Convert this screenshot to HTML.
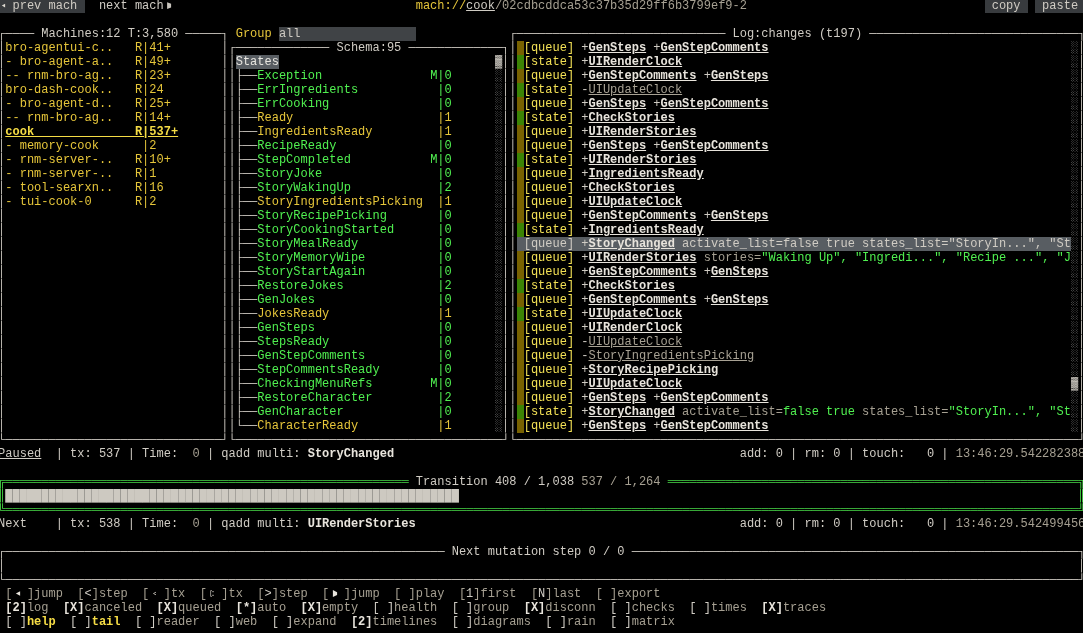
<!DOCTYPE html>
<html><head><meta charset="utf-8"><style>
html,body{margin:0;padding:0;background:#000;width:1083px;height:633px;overflow:hidden}
#t{will-change:transform;-webkit-font-smoothing:antialiased;position:absolute;left:0;top:0;width:1100px;height:660px;font-family:"Liberation Mono",monospace;font-size:12px;line-height:14px;color:#d0ccc4}
#t span{position:absolute;white-space:pre;height:14px}
#t i{position:absolute;height:14px;display:block}
</style></head><body><div id="t">
<i style="left:-1px;top:-1px;width:86px;background:#383b3e"></i>
<i style="left:985px;top:-1px;width:43px;background:#383b3e"></i>
<i style="left:1035px;top:-1px;width:51px;background:#383b3e"></i>
<i style="left:279px;top:27px;width:137px;background:#404346"></i>
<i style="left:236px;top:55px;width:43px;background:#585d62"></i>
<i style="left:517px;top:41px;width:7px;background:#786200"></i>
<i style="left:517px;top:55px;width:7px;background:#3c8404"></i>
<i style="left:517px;top:69px;width:7px;background:#786200"></i>
<i style="left:517px;top:83px;width:7px;background:#3c8404"></i>
<i style="left:517px;top:97px;width:7px;background:#786200"></i>
<i style="left:517px;top:111px;width:7px;background:#3c8404"></i>
<i style="left:517px;top:125px;width:7px;background:#786200"></i>
<i style="left:517px;top:139px;width:7px;background:#786200"></i>
<i style="left:517px;top:153px;width:7px;background:#3c8404"></i>
<i style="left:517px;top:167px;width:7px;background:#786200"></i>
<i style="left:517px;top:181px;width:7px;background:#786200"></i>
<i style="left:517px;top:195px;width:7px;background:#786200"></i>
<i style="left:517px;top:209px;width:7px;background:#786200"></i>
<i style="left:517px;top:223px;width:7px;background:#3c8404"></i>
<i style="left:517px;top:237px;width:554px;background:#585d62"></i>
<i style="left:524px;top:237px;width:51px;background:#585d62"></i>
<i style="left:582px;top:237px;width:7px;background:#585d62"></i>
<i style="left:589px;top:237px;width:86px;background:#585d62"></i>
<i style="left:683px;top:237px;width:388px;background:#585d62"></i>
<i style="left:517px;top:251px;width:7px;background:#786200"></i>
<i style="left:517px;top:265px;width:7px;background:#786200"></i>
<i style="left:517px;top:279px;width:7px;background:#3c8404"></i>
<i style="left:517px;top:293px;width:7px;background:#786200"></i>
<i style="left:517px;top:307px;width:7px;background:#3c8404"></i>
<i style="left:517px;top:321px;width:7px;background:#786200"></i>
<i style="left:517px;top:335px;width:7px;background:#786200"></i>
<i style="left:517px;top:349px;width:7px;background:#786200"></i>
<i style="left:517px;top:363px;width:7px;background:#786200"></i>
<i style="left:517px;top:377px;width:7px;background:#786200"></i>
<i style="left:517px;top:391px;width:7px;background:#786200"></i>
<i style="left:517px;top:405px;width:7px;background:#3c8404"></i>
<i style="left:517px;top:419px;width:7px;background:#786200"></i>
<span style="left:-1.9px;top:-1.2px;color:#d0ccc4;">  prev mach </span>
<span style="left:98.9px;top:-1.2px;color:#d0ccc4;">next mach</span>
<span style="left:415.7px;top:-1.2px;color:#e6c63a;">mach://</span>
<span style="left:466.1px;top:-1.2px;color:#d0ccc4;text-decoration:underline;">cook</span>
<span style="left:494.9px;top:-1.2px;color:#a6a092;">/02cdbcddca53c37b35d29ff6b3799ef9-2</span>
<span style="left:984.5px;top:-1.2px;color:#d0ccc4;"> copy </span>
<span style="left:1034.9px;top:-1.2px;color:#d0ccc4;"> paste </span>
<span style="left:-1.9px;top:26.8px;color:#d0ccc4;">┌────</span>
<span style="left:34.1px;top:26.8px;color:#d0ccc4;"> </span>
<span style="left:41.3px;top:26.8px;color:#d0ccc4;">Machines:12 T:3,580</span>
<span style="left:178.1px;top:26.8px;color:#d0ccc4;"> </span>
<span style="left:185.3px;top:26.8px;color:#d0ccc4;">─────┐</span>
<span style="left:235.7px;top:26.8px;color:#e6c63a;">Group</span>
<span style="left:278.9px;top:26.8px;color:#d0ccc4;">all                </span>
<span style="left:509.3px;top:26.8px;color:#d0ccc4;">┌─────────────────────────────</span>
<span style="left:725.3px;top:26.8px;color:#d0ccc4;"> </span>
<span style="left:732.5px;top:26.8px;color:#d0ccc4;">Log:changes (t197)</span>
<span style="left:862.1px;top:26.8px;color:#d0ccc4;"> </span>
<span style="left:869.3px;top:26.8px;color:#d0ccc4;">─────────────────────────────┐</span>
<span style="left:-1.9px;top:40.8px;color:#d0ccc4;">│</span>
<span style="left:5.3px;top:40.8px;color:#e6c63a;">bro-agentui-c..   R|41+</span>
<span style="left:221.3px;top:40.8px;color:#d0ccc4;">│</span>
<span style="left:228.5px;top:40.8px;color:#d0ccc4;">┌─────────────</span>
<span style="left:329.3px;top:40.8px;color:#d0ccc4;"> </span>
<span style="left:336.5px;top:40.8px;color:#d0ccc4;">Schema:95</span>
<span style="left:401.3px;top:40.8px;color:#d0ccc4;"> </span>
<span style="left:408.5px;top:40.8px;color:#d0ccc4;">─────────────┐</span>
<span style="left:509.3px;top:40.8px;color:#d0ccc4;">│</span>
<span style="left:516.5px;top:40.8px;"> </span>
<span style="left:523.7px;top:40.8px;color:#f2e055;">[queue]</span>
<span style="left:581.3px;top:40.8px;color:#d0ccc4;">+</span>
<span style="left:588.5px;top:40.8px;color:#e8e4dc;font-weight:bold;text-decoration:underline;">GenSteps</span>
<span style="left:653.3px;top:40.8px;color:#d0ccc4;">+</span>
<span style="left:660.5px;top:40.8px;color:#e8e4dc;font-weight:bold;text-decoration:underline;">GenStepComments</span>
<span style="left:1070.9px;top:40.8px;color:#8a8a8a;">░</span>
<span style="left:1078.1px;top:40.8px;color:#d0ccc4;">│</span>
<span style="left:-1.9px;top:54.8px;color:#d0ccc4;">│</span>
<span style="left:5.3px;top:54.8px;color:#e6c63a;">- bro-agent-a..   R|49+</span>
<span style="left:221.3px;top:54.8px;color:#d0ccc4;">│</span>
<span style="left:228.5px;top:54.8px;color:#d0ccc4;">│</span>
<span style="left:235.7px;top:54.8px;color:#e8e6e0;">States</span>
<span style="left:494.9px;top:54.8px;color:#d0ccc4;">▓</span>
<span style="left:502.1px;top:54.8px;color:#d0ccc4;">│</span>
<span style="left:509.3px;top:54.8px;color:#d0ccc4;">│</span>
<span style="left:516.5px;top:54.8px;"> </span>
<span style="left:523.7px;top:54.8px;color:#f2e055;">[state]</span>
<span style="left:581.3px;top:54.8px;color:#d0ccc4;">+</span>
<span style="left:588.5px;top:54.8px;color:#e8e4dc;font-weight:bold;text-decoration:underline;">UIRenderClock</span>
<span style="left:1070.9px;top:54.8px;color:#8a8a8a;">░</span>
<span style="left:1078.1px;top:54.8px;color:#d0ccc4;">│</span>
<span style="left:-1.9px;top:68.8px;color:#d0ccc4;">│</span>
<span style="left:5.3px;top:68.8px;color:#e6c63a;">-- rnm-bro-ag..   R|23+</span>
<span style="left:221.3px;top:68.8px;color:#d0ccc4;">│</span>
<span style="left:228.5px;top:68.8px;color:#d0ccc4;">│</span>
<span style="left:235.7px;top:68.8px;color:#d0ccc4;">├──</span>
<span style="left:257.3px;top:68.8px;color:#50f050;">Exception               M|0</span>
<span style="left:494.9px;top:68.8px;color:#8a8a8a;">░</span>
<span style="left:502.1px;top:68.8px;color:#d0ccc4;">│</span>
<span style="left:509.3px;top:68.8px;color:#d0ccc4;">│</span>
<span style="left:516.5px;top:68.8px;"> </span>
<span style="left:523.7px;top:68.8px;color:#f2e055;">[queue]</span>
<span style="left:581.3px;top:68.8px;color:#d0ccc4;">+</span>
<span style="left:588.5px;top:68.8px;color:#e8e4dc;font-weight:bold;text-decoration:underline;">GenStepComments</span>
<span style="left:703.7px;top:68.8px;color:#d0ccc4;">+</span>
<span style="left:710.9px;top:68.8px;color:#e8e4dc;font-weight:bold;text-decoration:underline;">GenSteps</span>
<span style="left:1070.9px;top:68.8px;color:#8a8a8a;">░</span>
<span style="left:1078.1px;top:68.8px;color:#d0ccc4;">│</span>
<span style="left:-1.9px;top:82.8px;color:#d0ccc4;">│</span>
<span style="left:5.3px;top:82.8px;color:#e6c63a;">bro-dash-cook..   R|24</span>
<span style="left:221.3px;top:82.8px;color:#d0ccc4;">│</span>
<span style="left:228.5px;top:82.8px;color:#d0ccc4;">│</span>
<span style="left:235.7px;top:82.8px;color:#d0ccc4;">├──</span>
<span style="left:257.3px;top:82.8px;color:#50f050;">ErrIngredients           |0</span>
<span style="left:494.9px;top:82.8px;color:#8a8a8a;">░</span>
<span style="left:502.1px;top:82.8px;color:#d0ccc4;">│</span>
<span style="left:509.3px;top:82.8px;color:#d0ccc4;">│</span>
<span style="left:516.5px;top:82.8px;"> </span>
<span style="left:523.7px;top:82.8px;color:#f2e055;">[state]</span>
<span style="left:581.3px;top:82.8px;color:#d0ccc4;">-</span>
<span style="left:588.5px;top:82.8px;color:#a8a294;text-decoration:underline;">UIUpdateClock</span>
<span style="left:1070.9px;top:82.8px;color:#8a8a8a;">░</span>
<span style="left:1078.1px;top:82.8px;color:#d0ccc4;">│</span>
<span style="left:-1.9px;top:96.8px;color:#d0ccc4;">│</span>
<span style="left:5.3px;top:96.8px;color:#e6c63a;">- bro-agent-d..   R|25+</span>
<span style="left:221.3px;top:96.8px;color:#d0ccc4;">│</span>
<span style="left:228.5px;top:96.8px;color:#d0ccc4;">│</span>
<span style="left:235.7px;top:96.8px;color:#d0ccc4;">├──</span>
<span style="left:257.3px;top:96.8px;color:#50f050;">ErrCooking               |0</span>
<span style="left:494.9px;top:96.8px;color:#8a8a8a;">░</span>
<span style="left:502.1px;top:96.8px;color:#d0ccc4;">│</span>
<span style="left:509.3px;top:96.8px;color:#d0ccc4;">│</span>
<span style="left:516.5px;top:96.8px;"> </span>
<span style="left:523.7px;top:96.8px;color:#f2e055;">[queue]</span>
<span style="left:581.3px;top:96.8px;color:#d0ccc4;">+</span>
<span style="left:588.5px;top:96.8px;color:#e8e4dc;font-weight:bold;text-decoration:underline;">GenSteps</span>
<span style="left:653.3px;top:96.8px;color:#d0ccc4;">+</span>
<span style="left:660.5px;top:96.8px;color:#e8e4dc;font-weight:bold;text-decoration:underline;">GenStepComments</span>
<span style="left:1070.9px;top:96.8px;color:#8a8a8a;">░</span>
<span style="left:1078.1px;top:96.8px;color:#d0ccc4;">│</span>
<span style="left:-1.9px;top:110.8px;color:#d0ccc4;">│</span>
<span style="left:5.3px;top:110.8px;color:#e6c63a;">-- rnm-bro-ag..   R|14+</span>
<span style="left:221.3px;top:110.8px;color:#d0ccc4;">│</span>
<span style="left:228.5px;top:110.8px;color:#d0ccc4;">│</span>
<span style="left:235.7px;top:110.8px;color:#d0ccc4;">├──</span>
<span style="left:257.3px;top:110.8px;color:#e6c63a;">Ready                    |1</span>
<span style="left:494.9px;top:110.8px;color:#8a8a8a;">░</span>
<span style="left:502.1px;top:110.8px;color:#d0ccc4;">│</span>
<span style="left:509.3px;top:110.8px;color:#d0ccc4;">│</span>
<span style="left:516.5px;top:110.8px;"> </span>
<span style="left:523.7px;top:110.8px;color:#f2e055;">[state]</span>
<span style="left:581.3px;top:110.8px;color:#d0ccc4;">+</span>
<span style="left:588.5px;top:110.8px;color:#e8e4dc;font-weight:bold;text-decoration:underline;">CheckStories</span>
<span style="left:1070.9px;top:110.8px;color:#8a8a8a;">░</span>
<span style="left:1078.1px;top:110.8px;color:#d0ccc4;">│</span>
<span style="left:-1.9px;top:124.8px;color:#d0ccc4;">│</span>
<span style="left:5.3px;top:124.8px;color:#f5dc45;font-weight:bold;text-decoration:underline;">cook              R|537+</span>
<span style="left:221.3px;top:124.8px;color:#d0ccc4;">│</span>
<span style="left:228.5px;top:124.8px;color:#d0ccc4;">│</span>
<span style="left:235.7px;top:124.8px;color:#d0ccc4;">├──</span>
<span style="left:257.3px;top:124.8px;color:#e6c63a;">IngredientsReady         |1</span>
<span style="left:494.9px;top:124.8px;color:#8a8a8a;">░</span>
<span style="left:502.1px;top:124.8px;color:#d0ccc4;">│</span>
<span style="left:509.3px;top:124.8px;color:#d0ccc4;">│</span>
<span style="left:516.5px;top:124.8px;"> </span>
<span style="left:523.7px;top:124.8px;color:#f2e055;">[queue]</span>
<span style="left:581.3px;top:124.8px;color:#d0ccc4;">+</span>
<span style="left:588.5px;top:124.8px;color:#e8e4dc;font-weight:bold;text-decoration:underline;">UIRenderStories</span>
<span style="left:1070.9px;top:124.8px;color:#8a8a8a;">░</span>
<span style="left:1078.1px;top:124.8px;color:#d0ccc4;">│</span>
<span style="left:-1.9px;top:138.8px;color:#d0ccc4;">│</span>
<span style="left:5.3px;top:138.8px;color:#e6c63a;">- memory-cook      |2</span>
<span style="left:221.3px;top:138.8px;color:#d0ccc4;">│</span>
<span style="left:228.5px;top:138.8px;color:#d0ccc4;">│</span>
<span style="left:235.7px;top:138.8px;color:#d0ccc4;">├──</span>
<span style="left:257.3px;top:138.8px;color:#50f050;">RecipeReady              |0</span>
<span style="left:494.9px;top:138.8px;color:#8a8a8a;">░</span>
<span style="left:502.1px;top:138.8px;color:#d0ccc4;">│</span>
<span style="left:509.3px;top:138.8px;color:#d0ccc4;">│</span>
<span style="left:516.5px;top:138.8px;"> </span>
<span style="left:523.7px;top:138.8px;color:#f2e055;">[queue]</span>
<span style="left:581.3px;top:138.8px;color:#d0ccc4;">+</span>
<span style="left:588.5px;top:138.8px;color:#e8e4dc;font-weight:bold;text-decoration:underline;">GenSteps</span>
<span style="left:653.3px;top:138.8px;color:#d0ccc4;">+</span>
<span style="left:660.5px;top:138.8px;color:#e8e4dc;font-weight:bold;text-decoration:underline;">GenStepComments</span>
<span style="left:1070.9px;top:138.8px;color:#8a8a8a;">░</span>
<span style="left:1078.1px;top:138.8px;color:#d0ccc4;">│</span>
<span style="left:-1.9px;top:152.8px;color:#d0ccc4;">│</span>
<span style="left:5.3px;top:152.8px;color:#e6c63a;">- rnm-server-..   R|10+</span>
<span style="left:221.3px;top:152.8px;color:#d0ccc4;">│</span>
<span style="left:228.5px;top:152.8px;color:#d0ccc4;">│</span>
<span style="left:235.7px;top:152.8px;color:#d0ccc4;">├──</span>
<span style="left:257.3px;top:152.8px;color:#50f050;">StepCompleted           M|0</span>
<span style="left:494.9px;top:152.8px;color:#8a8a8a;">░</span>
<span style="left:502.1px;top:152.8px;color:#d0ccc4;">│</span>
<span style="left:509.3px;top:152.8px;color:#d0ccc4;">│</span>
<span style="left:516.5px;top:152.8px;"> </span>
<span style="left:523.7px;top:152.8px;color:#f2e055;">[state]</span>
<span style="left:581.3px;top:152.8px;color:#d0ccc4;">+</span>
<span style="left:588.5px;top:152.8px;color:#e8e4dc;font-weight:bold;text-decoration:underline;">UIRenderStories</span>
<span style="left:1070.9px;top:152.8px;color:#8a8a8a;">░</span>
<span style="left:1078.1px;top:152.8px;color:#d0ccc4;">│</span>
<span style="left:-1.9px;top:166.8px;color:#d0ccc4;">│</span>
<span style="left:5.3px;top:166.8px;color:#e6c63a;">- rnm-server-..   R|1</span>
<span style="left:221.3px;top:166.8px;color:#d0ccc4;">│</span>
<span style="left:228.5px;top:166.8px;color:#d0ccc4;">│</span>
<span style="left:235.7px;top:166.8px;color:#d0ccc4;">├──</span>
<span style="left:257.3px;top:166.8px;color:#50f050;">StoryJoke                |0</span>
<span style="left:494.9px;top:166.8px;color:#8a8a8a;">░</span>
<span style="left:502.1px;top:166.8px;color:#d0ccc4;">│</span>
<span style="left:509.3px;top:166.8px;color:#d0ccc4;">│</span>
<span style="left:516.5px;top:166.8px;"> </span>
<span style="left:523.7px;top:166.8px;color:#f2e055;">[queue]</span>
<span style="left:581.3px;top:166.8px;color:#d0ccc4;">+</span>
<span style="left:588.5px;top:166.8px;color:#e8e4dc;font-weight:bold;text-decoration:underline;">IngredientsReady</span>
<span style="left:1070.9px;top:166.8px;color:#8a8a8a;">░</span>
<span style="left:1078.1px;top:166.8px;color:#d0ccc4;">│</span>
<span style="left:-1.9px;top:180.8px;color:#d0ccc4;">│</span>
<span style="left:5.3px;top:180.8px;color:#e6c63a;">- tool-searxn..   R|16</span>
<span style="left:221.3px;top:180.8px;color:#d0ccc4;">│</span>
<span style="left:228.5px;top:180.8px;color:#d0ccc4;">│</span>
<span style="left:235.7px;top:180.8px;color:#d0ccc4;">├──</span>
<span style="left:257.3px;top:180.8px;color:#50f050;">StoryWakingUp            |2</span>
<span style="left:494.9px;top:180.8px;color:#8a8a8a;">░</span>
<span style="left:502.1px;top:180.8px;color:#d0ccc4;">│</span>
<span style="left:509.3px;top:180.8px;color:#d0ccc4;">│</span>
<span style="left:516.5px;top:180.8px;"> </span>
<span style="left:523.7px;top:180.8px;color:#f2e055;">[queue]</span>
<span style="left:581.3px;top:180.8px;color:#d0ccc4;">+</span>
<span style="left:588.5px;top:180.8px;color:#e8e4dc;font-weight:bold;text-decoration:underline;">CheckStories</span>
<span style="left:1070.9px;top:180.8px;color:#8a8a8a;">░</span>
<span style="left:1078.1px;top:180.8px;color:#d0ccc4;">│</span>
<span style="left:-1.9px;top:194.8px;color:#d0ccc4;">│</span>
<span style="left:5.3px;top:194.8px;color:#e6c63a;">- tui-cook-0      R|2</span>
<span style="left:221.3px;top:194.8px;color:#d0ccc4;">│</span>
<span style="left:228.5px;top:194.8px;color:#d0ccc4;">│</span>
<span style="left:235.7px;top:194.8px;color:#d0ccc4;">├──</span>
<span style="left:257.3px;top:194.8px;color:#e6c63a;">StoryIngredientsPicking  |1</span>
<span style="left:494.9px;top:194.8px;color:#8a8a8a;">░</span>
<span style="left:502.1px;top:194.8px;color:#d0ccc4;">│</span>
<span style="left:509.3px;top:194.8px;color:#d0ccc4;">│</span>
<span style="left:516.5px;top:194.8px;"> </span>
<span style="left:523.7px;top:194.8px;color:#f2e055;">[queue]</span>
<span style="left:581.3px;top:194.8px;color:#d0ccc4;">+</span>
<span style="left:588.5px;top:194.8px;color:#e8e4dc;font-weight:bold;text-decoration:underline;">UIUpdateClock</span>
<span style="left:1070.9px;top:194.8px;color:#8a8a8a;">░</span>
<span style="left:1078.1px;top:194.8px;color:#d0ccc4;">│</span>
<span style="left:-1.9px;top:208.8px;color:#d0ccc4;">│</span>
<span style="left:221.3px;top:208.8px;color:#d0ccc4;">│</span>
<span style="left:228.5px;top:208.8px;color:#d0ccc4;">│</span>
<span style="left:235.7px;top:208.8px;color:#d0ccc4;">├──</span>
<span style="left:257.3px;top:208.8px;color:#50f050;">StoryRecipePicking       |0</span>
<span style="left:494.9px;top:208.8px;color:#8a8a8a;">░</span>
<span style="left:502.1px;top:208.8px;color:#d0ccc4;">│</span>
<span style="left:509.3px;top:208.8px;color:#d0ccc4;">│</span>
<span style="left:516.5px;top:208.8px;"> </span>
<span style="left:523.7px;top:208.8px;color:#f2e055;">[queue]</span>
<span style="left:581.3px;top:208.8px;color:#d0ccc4;">+</span>
<span style="left:588.5px;top:208.8px;color:#e8e4dc;font-weight:bold;text-decoration:underline;">GenStepComments</span>
<span style="left:703.7px;top:208.8px;color:#d0ccc4;">+</span>
<span style="left:710.9px;top:208.8px;color:#e8e4dc;font-weight:bold;text-decoration:underline;">GenSteps</span>
<span style="left:1070.9px;top:208.8px;color:#8a8a8a;">░</span>
<span style="left:1078.1px;top:208.8px;color:#d0ccc4;">│</span>
<span style="left:-1.9px;top:222.8px;color:#d0ccc4;">│</span>
<span style="left:221.3px;top:222.8px;color:#d0ccc4;">│</span>
<span style="left:228.5px;top:222.8px;color:#d0ccc4;">│</span>
<span style="left:235.7px;top:222.8px;color:#d0ccc4;">├──</span>
<span style="left:257.3px;top:222.8px;color:#50f050;">StoryCookingStarted      |0</span>
<span style="left:494.9px;top:222.8px;color:#8a8a8a;">░</span>
<span style="left:502.1px;top:222.8px;color:#d0ccc4;">│</span>
<span style="left:509.3px;top:222.8px;color:#d0ccc4;">│</span>
<span style="left:516.5px;top:222.8px;"> </span>
<span style="left:523.7px;top:222.8px;color:#f2e055;">[state]</span>
<span style="left:581.3px;top:222.8px;color:#d0ccc4;">+</span>
<span style="left:588.5px;top:222.8px;color:#e8e4dc;font-weight:bold;text-decoration:underline;">IngredientsReady</span>
<span style="left:1070.9px;top:222.8px;color:#8a8a8a;">░</span>
<span style="left:1078.1px;top:222.8px;color:#d0ccc4;">│</span>
<span style="left:-1.9px;top:236.8px;color:#d0ccc4;">│</span>
<span style="left:221.3px;top:236.8px;color:#d0ccc4;">│</span>
<span style="left:228.5px;top:236.8px;color:#d0ccc4;">│</span>
<span style="left:235.7px;top:236.8px;color:#d0ccc4;">├──</span>
<span style="left:257.3px;top:236.8px;color:#50f050;">StoryMealReady           |0</span>
<span style="left:494.9px;top:236.8px;color:#8a8a8a;">░</span>
<span style="left:502.1px;top:236.8px;color:#d0ccc4;">│</span>
<span style="left:509.3px;top:236.8px;color:#d0ccc4;">│</span>
<span style="left:516.5px;top:236.8px;">                                                                             </span>
<span style="left:523.7px;top:236.8px;color:#d0ccc4;">[queue]</span>
<span style="left:581.3px;top:236.8px;color:#d0ccc4;">+</span>
<span style="left:588.5px;top:236.8px;color:#e8e4dc;font-weight:bold;text-decoration:underline;">StoryChanged</span>
<span style="left:682.1px;top:236.8px;color:#d0ccc4;">activate_list=false true states_list=&quot;StoryIn...&quot;, &quot;St</span>
<span style="left:1070.9px;top:236.8px;color:#8a8a8a;">░</span>
<span style="left:1078.1px;top:236.8px;color:#d0ccc4;">│</span>
<span style="left:-1.9px;top:250.8px;color:#d0ccc4;">│</span>
<span style="left:221.3px;top:250.8px;color:#d0ccc4;">│</span>
<span style="left:228.5px;top:250.8px;color:#d0ccc4;">│</span>
<span style="left:235.7px;top:250.8px;color:#d0ccc4;">├──</span>
<span style="left:257.3px;top:250.8px;color:#50f050;">StoryMemoryWipe          |0</span>
<span style="left:494.9px;top:250.8px;color:#8a8a8a;">░</span>
<span style="left:502.1px;top:250.8px;color:#d0ccc4;">│</span>
<span style="left:509.3px;top:250.8px;color:#d0ccc4;">│</span>
<span style="left:516.5px;top:250.8px;"> </span>
<span style="left:523.7px;top:250.8px;color:#f2e055;">[queue]</span>
<span style="left:581.3px;top:250.8px;color:#d0ccc4;">+</span>
<span style="left:588.5px;top:250.8px;color:#e8e4dc;font-weight:bold;text-decoration:underline;">UIRenderStories</span>
<span style="left:703.7px;top:250.8px;color:#a6a092;">stories=</span>
<span style="left:761.3px;top:250.8px;color:#50f050;">&quot;Waking Up&quot;, &quot;Ingredi...&quot;, &quot;Recipe ...&quot;, &quot;J</span>
<span style="left:1070.9px;top:250.8px;color:#8a8a8a;">░</span>
<span style="left:1078.1px;top:250.8px;color:#d0ccc4;">│</span>
<span style="left:-1.9px;top:264.8px;color:#d0ccc4;">│</span>
<span style="left:221.3px;top:264.8px;color:#d0ccc4;">│</span>
<span style="left:228.5px;top:264.8px;color:#d0ccc4;">│</span>
<span style="left:235.7px;top:264.8px;color:#d0ccc4;">├──</span>
<span style="left:257.3px;top:264.8px;color:#50f050;">StoryStartAgain          |0</span>
<span style="left:494.9px;top:264.8px;color:#8a8a8a;">░</span>
<span style="left:502.1px;top:264.8px;color:#d0ccc4;">│</span>
<span style="left:509.3px;top:264.8px;color:#d0ccc4;">│</span>
<span style="left:516.5px;top:264.8px;"> </span>
<span style="left:523.7px;top:264.8px;color:#f2e055;">[queue]</span>
<span style="left:581.3px;top:264.8px;color:#d0ccc4;">+</span>
<span style="left:588.5px;top:264.8px;color:#e8e4dc;font-weight:bold;text-decoration:underline;">GenStepComments</span>
<span style="left:703.7px;top:264.8px;color:#d0ccc4;">+</span>
<span style="left:710.9px;top:264.8px;color:#e8e4dc;font-weight:bold;text-decoration:underline;">GenSteps</span>
<span style="left:1070.9px;top:264.8px;color:#8a8a8a;">░</span>
<span style="left:1078.1px;top:264.8px;color:#d0ccc4;">│</span>
<span style="left:-1.9px;top:278.8px;color:#d0ccc4;">│</span>
<span style="left:221.3px;top:278.8px;color:#d0ccc4;">│</span>
<span style="left:228.5px;top:278.8px;color:#d0ccc4;">│</span>
<span style="left:235.7px;top:278.8px;color:#d0ccc4;">├──</span>
<span style="left:257.3px;top:278.8px;color:#50f050;">RestoreJokes             |2</span>
<span style="left:494.9px;top:278.8px;color:#8a8a8a;">░</span>
<span style="left:502.1px;top:278.8px;color:#d0ccc4;">│</span>
<span style="left:509.3px;top:278.8px;color:#d0ccc4;">│</span>
<span style="left:516.5px;top:278.8px;"> </span>
<span style="left:523.7px;top:278.8px;color:#f2e055;">[state]</span>
<span style="left:581.3px;top:278.8px;color:#d0ccc4;">+</span>
<span style="left:588.5px;top:278.8px;color:#e8e4dc;font-weight:bold;text-decoration:underline;">CheckStories</span>
<span style="left:1070.9px;top:278.8px;color:#8a8a8a;">░</span>
<span style="left:1078.1px;top:278.8px;color:#d0ccc4;">│</span>
<span style="left:-1.9px;top:292.8px;color:#d0ccc4;">│</span>
<span style="left:221.3px;top:292.8px;color:#d0ccc4;">│</span>
<span style="left:228.5px;top:292.8px;color:#d0ccc4;">│</span>
<span style="left:235.7px;top:292.8px;color:#d0ccc4;">├──</span>
<span style="left:257.3px;top:292.8px;color:#50f050;">GenJokes                 |0</span>
<span style="left:494.9px;top:292.8px;color:#8a8a8a;">░</span>
<span style="left:502.1px;top:292.8px;color:#d0ccc4;">│</span>
<span style="left:509.3px;top:292.8px;color:#d0ccc4;">│</span>
<span style="left:516.5px;top:292.8px;"> </span>
<span style="left:523.7px;top:292.8px;color:#f2e055;">[queue]</span>
<span style="left:581.3px;top:292.8px;color:#d0ccc4;">+</span>
<span style="left:588.5px;top:292.8px;color:#e8e4dc;font-weight:bold;text-decoration:underline;">GenStepComments</span>
<span style="left:703.7px;top:292.8px;color:#d0ccc4;">+</span>
<span style="left:710.9px;top:292.8px;color:#e8e4dc;font-weight:bold;text-decoration:underline;">GenSteps</span>
<span style="left:1070.9px;top:292.8px;color:#8a8a8a;">░</span>
<span style="left:1078.1px;top:292.8px;color:#d0ccc4;">│</span>
<span style="left:-1.9px;top:306.8px;color:#d0ccc4;">│</span>
<span style="left:221.3px;top:306.8px;color:#d0ccc4;">│</span>
<span style="left:228.5px;top:306.8px;color:#d0ccc4;">│</span>
<span style="left:235.7px;top:306.8px;color:#d0ccc4;">├──</span>
<span style="left:257.3px;top:306.8px;color:#e6c63a;">JokesReady               |1</span>
<span style="left:494.9px;top:306.8px;color:#8a8a8a;">░</span>
<span style="left:502.1px;top:306.8px;color:#d0ccc4;">│</span>
<span style="left:509.3px;top:306.8px;color:#d0ccc4;">│</span>
<span style="left:516.5px;top:306.8px;"> </span>
<span style="left:523.7px;top:306.8px;color:#f2e055;">[state]</span>
<span style="left:581.3px;top:306.8px;color:#d0ccc4;">+</span>
<span style="left:588.5px;top:306.8px;color:#e8e4dc;font-weight:bold;text-decoration:underline;">UIUpdateClock</span>
<span style="left:1070.9px;top:306.8px;color:#8a8a8a;">░</span>
<span style="left:1078.1px;top:306.8px;color:#d0ccc4;">│</span>
<span style="left:-1.9px;top:320.8px;color:#d0ccc4;">│</span>
<span style="left:221.3px;top:320.8px;color:#d0ccc4;">│</span>
<span style="left:228.5px;top:320.8px;color:#d0ccc4;">│</span>
<span style="left:235.7px;top:320.8px;color:#d0ccc4;">├──</span>
<span style="left:257.3px;top:320.8px;color:#50f050;">GenSteps                 |0</span>
<span style="left:494.9px;top:320.8px;color:#8a8a8a;">░</span>
<span style="left:502.1px;top:320.8px;color:#d0ccc4;">│</span>
<span style="left:509.3px;top:320.8px;color:#d0ccc4;">│</span>
<span style="left:516.5px;top:320.8px;"> </span>
<span style="left:523.7px;top:320.8px;color:#f2e055;">[queue]</span>
<span style="left:581.3px;top:320.8px;color:#d0ccc4;">+</span>
<span style="left:588.5px;top:320.8px;color:#e8e4dc;font-weight:bold;text-decoration:underline;">UIRenderClock</span>
<span style="left:1070.9px;top:320.8px;color:#8a8a8a;">░</span>
<span style="left:1078.1px;top:320.8px;color:#d0ccc4;">│</span>
<span style="left:-1.9px;top:334.8px;color:#d0ccc4;">│</span>
<span style="left:221.3px;top:334.8px;color:#d0ccc4;">│</span>
<span style="left:228.5px;top:334.8px;color:#d0ccc4;">│</span>
<span style="left:235.7px;top:334.8px;color:#d0ccc4;">├──</span>
<span style="left:257.3px;top:334.8px;color:#50f050;">StepsReady               |0</span>
<span style="left:494.9px;top:334.8px;color:#8a8a8a;">░</span>
<span style="left:502.1px;top:334.8px;color:#d0ccc4;">│</span>
<span style="left:509.3px;top:334.8px;color:#d0ccc4;">│</span>
<span style="left:516.5px;top:334.8px;"> </span>
<span style="left:523.7px;top:334.8px;color:#f2e055;">[queue]</span>
<span style="left:581.3px;top:334.8px;color:#d0ccc4;">-</span>
<span style="left:588.5px;top:334.8px;color:#a8a294;text-decoration:underline;">UIUpdateClock</span>
<span style="left:1070.9px;top:334.8px;color:#8a8a8a;">░</span>
<span style="left:1078.1px;top:334.8px;color:#d0ccc4;">│</span>
<span style="left:-1.9px;top:348.8px;color:#d0ccc4;">│</span>
<span style="left:221.3px;top:348.8px;color:#d0ccc4;">│</span>
<span style="left:228.5px;top:348.8px;color:#d0ccc4;">│</span>
<span style="left:235.7px;top:348.8px;color:#d0ccc4;">├──</span>
<span style="left:257.3px;top:348.8px;color:#50f050;">GenStepComments          |0</span>
<span style="left:494.9px;top:348.8px;color:#8a8a8a;">░</span>
<span style="left:502.1px;top:348.8px;color:#d0ccc4;">│</span>
<span style="left:509.3px;top:348.8px;color:#d0ccc4;">│</span>
<span style="left:516.5px;top:348.8px;"> </span>
<span style="left:523.7px;top:348.8px;color:#f2e055;">[queue]</span>
<span style="left:581.3px;top:348.8px;color:#d0ccc4;">-</span>
<span style="left:588.5px;top:348.8px;color:#a8a294;text-decoration:underline;">StoryIngredientsPicking</span>
<span style="left:1070.9px;top:348.8px;color:#8a8a8a;">░</span>
<span style="left:1078.1px;top:348.8px;color:#d0ccc4;">│</span>
<span style="left:-1.9px;top:362.8px;color:#d0ccc4;">│</span>
<span style="left:221.3px;top:362.8px;color:#d0ccc4;">│</span>
<span style="left:228.5px;top:362.8px;color:#d0ccc4;">│</span>
<span style="left:235.7px;top:362.8px;color:#d0ccc4;">├──</span>
<span style="left:257.3px;top:362.8px;color:#50f050;">StepCommentsReady        |0</span>
<span style="left:494.9px;top:362.8px;color:#8a8a8a;">░</span>
<span style="left:502.1px;top:362.8px;color:#d0ccc4;">│</span>
<span style="left:509.3px;top:362.8px;color:#d0ccc4;">│</span>
<span style="left:516.5px;top:362.8px;"> </span>
<span style="left:523.7px;top:362.8px;color:#f2e055;">[queue]</span>
<span style="left:581.3px;top:362.8px;color:#d0ccc4;">+</span>
<span style="left:588.5px;top:362.8px;color:#e8e4dc;font-weight:bold;text-decoration:underline;">StoryRecipePicking</span>
<span style="left:1070.9px;top:362.8px;color:#8a8a8a;">░</span>
<span style="left:1078.1px;top:362.8px;color:#d0ccc4;">│</span>
<span style="left:-1.9px;top:376.8px;color:#d0ccc4;">│</span>
<span style="left:221.3px;top:376.8px;color:#d0ccc4;">│</span>
<span style="left:228.5px;top:376.8px;color:#d0ccc4;">│</span>
<span style="left:235.7px;top:376.8px;color:#d0ccc4;">├──</span>
<span style="left:257.3px;top:376.8px;color:#50f050;">CheckingMenuRefs        M|0</span>
<span style="left:494.9px;top:376.8px;color:#8a8a8a;">░</span>
<span style="left:502.1px;top:376.8px;color:#d0ccc4;">│</span>
<span style="left:509.3px;top:376.8px;color:#d0ccc4;">│</span>
<span style="left:516.5px;top:376.8px;"> </span>
<span style="left:523.7px;top:376.8px;color:#f2e055;">[queue]</span>
<span style="left:581.3px;top:376.8px;color:#d0ccc4;">+</span>
<span style="left:588.5px;top:376.8px;color:#e8e4dc;font-weight:bold;text-decoration:underline;">UIUpdateClock</span>
<span style="left:1070.9px;top:376.8px;color:#d0ccc4;">▓</span>
<span style="left:1078.1px;top:376.8px;color:#d0ccc4;">│</span>
<span style="left:-1.9px;top:390.8px;color:#d0ccc4;">│</span>
<span style="left:221.3px;top:390.8px;color:#d0ccc4;">│</span>
<span style="left:228.5px;top:390.8px;color:#d0ccc4;">│</span>
<span style="left:235.7px;top:390.8px;color:#d0ccc4;">├──</span>
<span style="left:257.3px;top:390.8px;color:#50f050;">RestoreCharacter         |2</span>
<span style="left:494.9px;top:390.8px;color:#8a8a8a;">░</span>
<span style="left:502.1px;top:390.8px;color:#d0ccc4;">│</span>
<span style="left:509.3px;top:390.8px;color:#d0ccc4;">│</span>
<span style="left:516.5px;top:390.8px;"> </span>
<span style="left:523.7px;top:390.8px;color:#f2e055;">[queue]</span>
<span style="left:581.3px;top:390.8px;color:#d0ccc4;">+</span>
<span style="left:588.5px;top:390.8px;color:#e8e4dc;font-weight:bold;text-decoration:underline;">GenSteps</span>
<span style="left:653.3px;top:390.8px;color:#d0ccc4;">+</span>
<span style="left:660.5px;top:390.8px;color:#e8e4dc;font-weight:bold;text-decoration:underline;">GenStepComments</span>
<span style="left:1070.9px;top:390.8px;color:#8a8a8a;">░</span>
<span style="left:1078.1px;top:390.8px;color:#d0ccc4;">│</span>
<span style="left:-1.9px;top:404.8px;color:#d0ccc4;">│</span>
<span style="left:221.3px;top:404.8px;color:#d0ccc4;">│</span>
<span style="left:228.5px;top:404.8px;color:#d0ccc4;">│</span>
<span style="left:235.7px;top:404.8px;color:#d0ccc4;">├──</span>
<span style="left:257.3px;top:404.8px;color:#50f050;">GenCharacter             |0</span>
<span style="left:494.9px;top:404.8px;color:#8a8a8a;">░</span>
<span style="left:502.1px;top:404.8px;color:#d0ccc4;">│</span>
<span style="left:509.3px;top:404.8px;color:#d0ccc4;">│</span>
<span style="left:516.5px;top:404.8px;"> </span>
<span style="left:523.7px;top:404.8px;color:#f2e055;">[state]</span>
<span style="left:581.3px;top:404.8px;color:#d0ccc4;">+</span>
<span style="left:588.5px;top:404.8px;color:#e8e4dc;font-weight:bold;text-decoration:underline;">StoryChanged</span>
<span style="left:682.1px;top:404.8px;color:#a6a092;">activate_list=</span>
<span style="left:782.9px;top:404.8px;color:#50f050;">false true</span>
<span style="left:854.9px;top:404.8px;color:#a6a092;"> states_list=</span>
<span style="left:948.5px;top:404.8px;color:#50f050;">&quot;StoryIn...&quot;, &quot;St</span>
<span style="left:1070.9px;top:404.8px;color:#8a8a8a;">░</span>
<span style="left:1078.1px;top:404.8px;color:#d0ccc4;">│</span>
<span style="left:-1.9px;top:418.8px;color:#d0ccc4;">│</span>
<span style="left:221.3px;top:418.8px;color:#d0ccc4;">│</span>
<span style="left:228.5px;top:418.8px;color:#d0ccc4;">│</span>
<span style="left:235.7px;top:418.8px;color:#d0ccc4;">└──</span>
<span style="left:257.3px;top:418.8px;color:#e6c63a;">CharacterReady           |1</span>
<span style="left:494.9px;top:418.8px;color:#8a8a8a;">░</span>
<span style="left:502.1px;top:418.8px;color:#d0ccc4;">│</span>
<span style="left:509.3px;top:418.8px;color:#d0ccc4;">│</span>
<span style="left:516.5px;top:418.8px;"> </span>
<span style="left:523.7px;top:418.8px;color:#f2e055;">[queue]</span>
<span style="left:581.3px;top:418.8px;color:#d0ccc4;">+</span>
<span style="left:588.5px;top:418.8px;color:#e8e4dc;font-weight:bold;text-decoration:underline;">GenSteps</span>
<span style="left:653.3px;top:418.8px;color:#d0ccc4;">+</span>
<span style="left:660.5px;top:418.8px;color:#e8e4dc;font-weight:bold;text-decoration:underline;">GenStepComments</span>
<span style="left:1070.9px;top:418.8px;color:#8a8a8a;">░</span>
<span style="left:1078.1px;top:418.8px;color:#d0ccc4;">│</span>
<span style="left:-1.9px;top:432.8px;color:#d0ccc4;">└──────────────────────────────┘</span>
<span style="left:228.5px;top:432.8px;color:#d0ccc4;">└─────────────────────────────────────┘</span>
<span style="left:509.3px;top:432.8px;color:#d0ccc4;">└──────────────────────────────────────────────────────────────────────────────┘</span>
<span style="left:-1.9px;top:446.8px;color:#d0ccc4;text-decoration:underline;">Paused</span>
<span style="left:55.7px;top:446.8px;color:#d0ccc4;">| tx: 537 | Time:  </span>
<span style="left:192.5px;top:446.8px;color:#a6a092;">0</span>
<span style="left:199.7px;top:446.8px;color:#d0ccc4;"> | qadd multi: </span>
<span style="left:307.7px;top:446.8px;color:#e8e4dc;font-weight:bold;">StoryChanged</span>
<span style="left:739.7px;top:446.8px;color:#d0ccc4;">add: 0 | rm: 0 | touch:   0 | </span>
<span style="left:955.7px;top:446.8px;color:#a6a092;">13:46:29.542282388</span>
<span style="left:-1.9px;top:474.8px;color:#48d848;">╔════════════════════════════════════════════════════════</span>
<span style="left:408.5px;top:474.8px;color:#48d848;"> </span>
<span style="left:415.7px;top:474.8px;color:#d0ccc4;">Transition 408 / 1,038</span>
<span style="left:574.1px;top:474.8px;color:#a6a092;"> 537 / 1,264</span>
<span style="left:660.5px;top:474.8px;color:#48d848;"> </span>
<span style="left:667.7px;top:474.8px;color:#48d848;">═════════════════════════════════════════════════════════╗</span>
<span style="left:-1.9px;top:488.8px;color:#48d848;">║</span>
<span style="left:5.3px;top:488.8px;color:#cdc9c1;">███████████████████████████████████████████████████████████████</span>
<span style="left:1078.1px;top:488.8px;color:#48d848;">║</span>
<span style="left:-1.9px;top:502.8px;color:#48d848;">╚═════════════════════════════════════════════════════════════════════════════════════════════════════════════════════════════════════════════════════╝</span>
<span style="left:-1.9px;top:516.8px;color:#d0ccc4;">Next</span>
<span style="left:55.7px;top:516.8px;color:#d0ccc4;">| tx: 538 | Time:  </span>
<span style="left:192.5px;top:516.8px;color:#a6a092;">0</span>
<span style="left:199.7px;top:516.8px;color:#d0ccc4;"> | qadd multi: </span>
<span style="left:307.7px;top:516.8px;color:#e8e4dc;font-weight:bold;">UIRenderStories</span>
<span style="left:739.7px;top:516.8px;color:#d0ccc4;">add: 0 | rm: 0 | touch:   0 | </span>
<span style="left:955.7px;top:516.8px;color:#a6a092;">13:46:29.542499456</span>
<span style="left:-1.9px;top:544.8px;color:#d0ccc4;">┌─────────────────────────────────────────────────────────────</span>
<span style="left:444.5px;top:544.8px;color:#d0ccc4;"> </span>
<span style="left:451.7px;top:544.8px;color:#d0ccc4;">Next mutation step 0 / 0</span>
<span style="left:624.5px;top:544.8px;color:#d0ccc4;"> </span>
<span style="left:631.7px;top:544.8px;color:#d0ccc4;">──────────────────────────────────────────────────────────────┐</span>
<span style="left:-1.9px;top:558.8px;color:#d0ccc4;">│</span>
<span style="left:1078.1px;top:558.8px;color:#d0ccc4;">│</span>
<span style="left:-1.9px;top:572.8px;color:#d0ccc4;">└─────────────────────────────────────────────────────────────────────────────────────────────────────────────────────────────────────────────────────┘</span>
<span style="left:5.3px;top:586.8px;color:#a6a092;">[</span>
<span style="left:12.5px;top:586.8px;color:#d0ccc4;"> </span>
<span style="left:19.7px;top:586.8px;color:#d0ccc4;"> </span>
<span style="left:26.9px;top:586.8px;color:#a6a092;">]</span>
<span style="left:34.1px;top:586.8px;color:#a6a092;">jump</span>
<span style="left:77.3px;top:586.8px;color:#a6a092;">[</span>
<span style="left:84.5px;top:586.8px;color:#d0ccc4;">&lt;</span>
<span style="left:91.7px;top:586.8px;color:#a6a092;">]</span>
<span style="left:98.9px;top:586.8px;color:#a6a092;">step</span>
<span style="left:142.1px;top:586.8px;color:#a6a092;">[</span>
<span style="left:149.3px;top:586.8px;color:#d0ccc4;"> </span>
<span style="left:156.5px;top:586.8px;color:#d0ccc4;"> </span>
<span style="left:163.7px;top:586.8px;color:#a6a092;">]</span>
<span style="left:170.9px;top:586.8px;color:#a6a092;">tx</span>
<span style="left:199.7px;top:586.8px;color:#a6a092;">[</span>
<span style="left:206.9px;top:586.8px;color:#d0ccc4;"> </span>
<span style="left:214.1px;top:586.8px;color:#d0ccc4;"> </span>
<span style="left:221.3px;top:586.8px;color:#a6a092;">]</span>
<span style="left:228.5px;top:586.8px;color:#a6a092;">tx</span>
<span style="left:257.3px;top:586.8px;color:#a6a092;">[</span>
<span style="left:264.5px;top:586.8px;color:#d0ccc4;">&gt;</span>
<span style="left:271.7px;top:586.8px;color:#a6a092;">]</span>
<span style="left:278.9px;top:586.8px;color:#a6a092;">step</span>
<span style="left:322.1px;top:586.8px;color:#a6a092;">[</span>
<span style="left:329.3px;top:586.8px;color:#d0ccc4;"> </span>
<span style="left:336.5px;top:586.8px;color:#d0ccc4;"> </span>
<span style="left:343.7px;top:586.8px;color:#a6a092;">]</span>
<span style="left:350.9px;top:586.8px;color:#a6a092;">jump</span>
<span style="left:394.1px;top:586.8px;color:#a6a092;">[</span>
<span style="left:401.3px;top:586.8px;color:#d0ccc4;"> </span>
<span style="left:408.5px;top:586.8px;color:#a6a092;">]</span>
<span style="left:415.7px;top:586.8px;color:#a6a092;">play</span>
<span style="left:458.9px;top:586.8px;color:#a6a092;">[</span>
<span style="left:466.1px;top:586.8px;color:#d0ccc4;">1</span>
<span style="left:473.3px;top:586.8px;color:#a6a092;">]</span>
<span style="left:480.5px;top:586.8px;color:#a6a092;">first</span>
<span style="left:530.9px;top:586.8px;color:#a6a092;">[</span>
<span style="left:538.1px;top:586.8px;color:#d0ccc4;">N</span>
<span style="left:545.3px;top:586.8px;color:#a6a092;">]</span>
<span style="left:552.5px;top:586.8px;color:#a6a092;">last</span>
<span style="left:595.7px;top:586.8px;color:#a6a092;">[</span>
<span style="left:602.9px;top:586.8px;color:#d0ccc4;"> </span>
<span style="left:610.1px;top:586.8px;color:#a6a092;">]</span>
<span style="left:617.3px;top:586.8px;color:#a6a092;">export</span>
<span style="left:5.3px;top:600.8px;color:#e8e4dc;font-weight:bold;">[</span>
<span style="left:12.5px;top:600.8px;color:#e8e4dc;font-weight:bold;">2</span>
<span style="left:19.7px;top:600.8px;color:#e8e4dc;font-weight:bold;">]</span>
<span style="left:26.9px;top:600.8px;color:#a6a092;">log</span>
<span style="left:62.9px;top:600.8px;color:#e8e4dc;font-weight:bold;">[</span>
<span style="left:70.1px;top:600.8px;color:#e8e4dc;font-weight:bold;">X</span>
<span style="left:77.3px;top:600.8px;color:#e8e4dc;font-weight:bold;">]</span>
<span style="left:84.5px;top:600.8px;color:#a6a092;">canceled</span>
<span style="left:156.5px;top:600.8px;color:#e8e4dc;font-weight:bold;">[</span>
<span style="left:163.7px;top:600.8px;color:#e8e4dc;font-weight:bold;">X</span>
<span style="left:170.9px;top:600.8px;color:#e8e4dc;font-weight:bold;">]</span>
<span style="left:178.1px;top:600.8px;color:#a6a092;">queued</span>
<span style="left:235.7px;top:600.8px;color:#e8e4dc;font-weight:bold;">[</span>
<span style="left:242.9px;top:600.8px;color:#e8e4dc;font-weight:bold;">*</span>
<span style="left:250.1px;top:600.8px;color:#e8e4dc;font-weight:bold;">]</span>
<span style="left:257.3px;top:600.8px;color:#a6a092;">auto</span>
<span style="left:300.5px;top:600.8px;color:#e8e4dc;font-weight:bold;">[</span>
<span style="left:307.7px;top:600.8px;color:#e8e4dc;font-weight:bold;">X</span>
<span style="left:314.9px;top:600.8px;color:#e8e4dc;font-weight:bold;">]</span>
<span style="left:322.1px;top:600.8px;color:#a6a092;">empty</span>
<span style="left:372.5px;top:600.8px;color:#d0ccc4;">[</span>
<span style="left:379.7px;top:600.8px;color:#d0ccc4;"> </span>
<span style="left:386.9px;top:600.8px;color:#d0ccc4;">]</span>
<span style="left:394.1px;top:600.8px;color:#a6a092;">health</span>
<span style="left:451.7px;top:600.8px;color:#d0ccc4;">[</span>
<span style="left:458.9px;top:600.8px;color:#d0ccc4;"> </span>
<span style="left:466.1px;top:600.8px;color:#d0ccc4;">]</span>
<span style="left:473.3px;top:600.8px;color:#a6a092;">group</span>
<span style="left:523.7px;top:600.8px;color:#e8e4dc;font-weight:bold;">[</span>
<span style="left:530.9px;top:600.8px;color:#e8e4dc;font-weight:bold;">X</span>
<span style="left:538.1px;top:600.8px;color:#e8e4dc;font-weight:bold;">]</span>
<span style="left:545.3px;top:600.8px;color:#a6a092;">disconn</span>
<span style="left:610.1px;top:600.8px;color:#d0ccc4;">[</span>
<span style="left:617.3px;top:600.8px;color:#d0ccc4;"> </span>
<span style="left:624.5px;top:600.8px;color:#d0ccc4;">]</span>
<span style="left:631.7px;top:600.8px;color:#a6a092;">checks</span>
<span style="left:689.3px;top:600.8px;color:#d0ccc4;">[</span>
<span style="left:696.5px;top:600.8px;color:#d0ccc4;"> </span>
<span style="left:703.7px;top:600.8px;color:#d0ccc4;">]</span>
<span style="left:710.9px;top:600.8px;color:#a6a092;">times</span>
<span style="left:761.3px;top:600.8px;color:#e8e4dc;font-weight:bold;">[</span>
<span style="left:768.5px;top:600.8px;color:#e8e4dc;font-weight:bold;">X</span>
<span style="left:775.7px;top:600.8px;color:#e8e4dc;font-weight:bold;">]</span>
<span style="left:782.9px;top:600.8px;color:#a6a092;">traces</span>
<span style="left:5.3px;top:614.8px;color:#d0ccc4;">[</span>
<span style="left:12.5px;top:614.8px;color:#d0ccc4;"> </span>
<span style="left:19.7px;top:614.8px;color:#d0ccc4;">]</span>
<span style="left:26.9px;top:614.8px;color:#f5dc45;font-weight:bold;">help</span>
<span style="left:70.1px;top:614.8px;color:#d0ccc4;">[</span>
<span style="left:77.3px;top:614.8px;color:#d0ccc4;"> </span>
<span style="left:84.5px;top:614.8px;color:#d0ccc4;">]</span>
<span style="left:91.7px;top:614.8px;color:#f5dc45;font-weight:bold;">tail</span>
<span style="left:134.9px;top:614.8px;color:#d0ccc4;">[</span>
<span style="left:142.1px;top:614.8px;color:#d0ccc4;"> </span>
<span style="left:149.3px;top:614.8px;color:#d0ccc4;">]</span>
<span style="left:156.5px;top:614.8px;color:#a6a092;">reader</span>
<span style="left:214.1px;top:614.8px;color:#d0ccc4;">[</span>
<span style="left:221.3px;top:614.8px;color:#d0ccc4;"> </span>
<span style="left:228.5px;top:614.8px;color:#d0ccc4;">]</span>
<span style="left:235.7px;top:614.8px;color:#a6a092;">web</span>
<span style="left:271.7px;top:614.8px;color:#d0ccc4;">[</span>
<span style="left:278.9px;top:614.8px;color:#d0ccc4;"> </span>
<span style="left:286.1px;top:614.8px;color:#d0ccc4;">]</span>
<span style="left:293.3px;top:614.8px;color:#a6a092;">expand</span>
<span style="left:350.9px;top:614.8px;color:#e8e4dc;font-weight:bold;">[</span>
<span style="left:358.1px;top:614.8px;color:#e8e4dc;font-weight:bold;">2</span>
<span style="left:365.3px;top:614.8px;color:#e8e4dc;font-weight:bold;">]</span>
<span style="left:372.5px;top:614.8px;color:#a6a092;">timelines</span>
<span style="left:451.7px;top:614.8px;color:#d0ccc4;">[</span>
<span style="left:458.9px;top:614.8px;color:#d0ccc4;"> </span>
<span style="left:466.1px;top:614.8px;color:#d0ccc4;">]</span>
<span style="left:473.3px;top:614.8px;color:#a6a092;">diagrams</span>
<span style="left:545.3px;top:614.8px;color:#d0ccc4;">[</span>
<span style="left:552.5px;top:614.8px;color:#d0ccc4;"> </span>
<span style="left:559.7px;top:614.8px;color:#d0ccc4;">]</span>
<span style="left:566.9px;top:614.8px;color:#a6a092;">rain</span>
<span style="left:610.1px;top:614.8px;color:#d0ccc4;">[</span>
<span style="left:617.3px;top:614.8px;color:#d0ccc4;"> </span>
<span style="left:624.5px;top:614.8px;color:#d0ccc4;">]</span>
<span style="left:631.7px;top:614.8px;color:#a6a092;">matrix</span><svg width="1083" height="633" style="position:absolute;left:0;top:0">
<polygon points="1.8,5.5 5.1,3.7 5.1,7.4" fill="#dcd8d0"/>
<polygon points="167.1,2.2 171.1,3.8 171.1,7.4 167.1,8.9" fill="#c8c4bc"/>
<polygon points="15.9,593.5 20.1,591.2 20.1,595.8" fill="#e8e4dc"/>
<polyline points="156,592.2 153.4,593.5 156,594.8" fill="none" stroke="#a8a49c" stroke-width="1"/>
<path d="M212,590.6 H210.6 V596.4 H212 M212,591.7 H214 M212,595.3 H214" fill="none" stroke="#8e8a84" stroke-width="1"/>
<polygon points="332.9,590 337.1,592.3 337.1,595 332.9,597.1" fill="#e8e4dc"/>
</svg>
</div></body></html>
